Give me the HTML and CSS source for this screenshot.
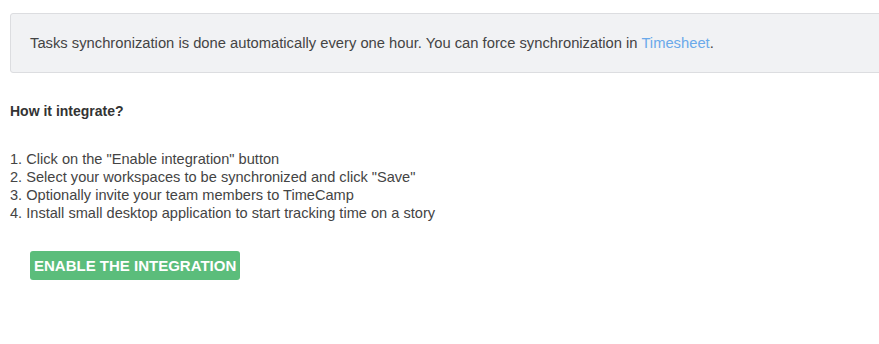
FILE: index.html
```html
<!DOCTYPE html>
<html lang="en">
<head>
  <meta charset="UTF-8">
  <title>Integration</title>
  <link rel="stylesheet" href="styles.css">
</head>
<body>

<div class="info-box">
  Tasks synchronization is done automatically every one hour. You can force synchronization in <a href="#">Timesheet</a>.
</div>

<h3>How it integrate?</h3>

<div class="steps">
  1. Click on the "Enable integration" button<br>
  2. Select your workspaces to be synchronized and click "Save"<br>
  3. Optionally invite your team members to TimeCamp<br>
  4. Install small desktop application to start tracking time on a story
</div>

<button class="enable-btn">Enable the integration</button>

</body>
</html>
```

FILE: styles.css
```css
html, body {
  margin: 0;
  padding: 0;
  overflow: hidden;
}

body {
  padding: 13px 10px;
  font-family: 'Liberation Sans', Arial, sans-serif;
  font-size: 14.6px;
  color: #444;
  background: #fff;
}

.info-box {
  width: 900px;
  height: 58px;
  box-sizing: content-box;
  padding: 0 19px;
  font-size: 14.75px;
  line-height: 59px;
  background: #f1f2f4;
  border: 1px solid #dcdde0;
  border-radius: 3px;
  color: #444;
}

.info-box a {
  color: #6aa9ea;
  text-decoration: none;
}

h3 {
  margin: 28px 0 0;
  font-size: 14px;
  line-height: 20px;
  color: #333;
}

.steps {
  margin-top: 29px;
  line-height: 18px;
}

.enable-btn {
  margin: 29px 0 0 20px;
  padding: 0 4px;
  height: 29px;
  border: none;
  border-radius: 3px;
  background: #5bbd7b;
  color: #fff;
  font-family: 'Liberation Sans', Arial, sans-serif;
  font-size: 15px;
  font-weight: bold;
  text-transform: uppercase;
  cursor: pointer;
}
```
